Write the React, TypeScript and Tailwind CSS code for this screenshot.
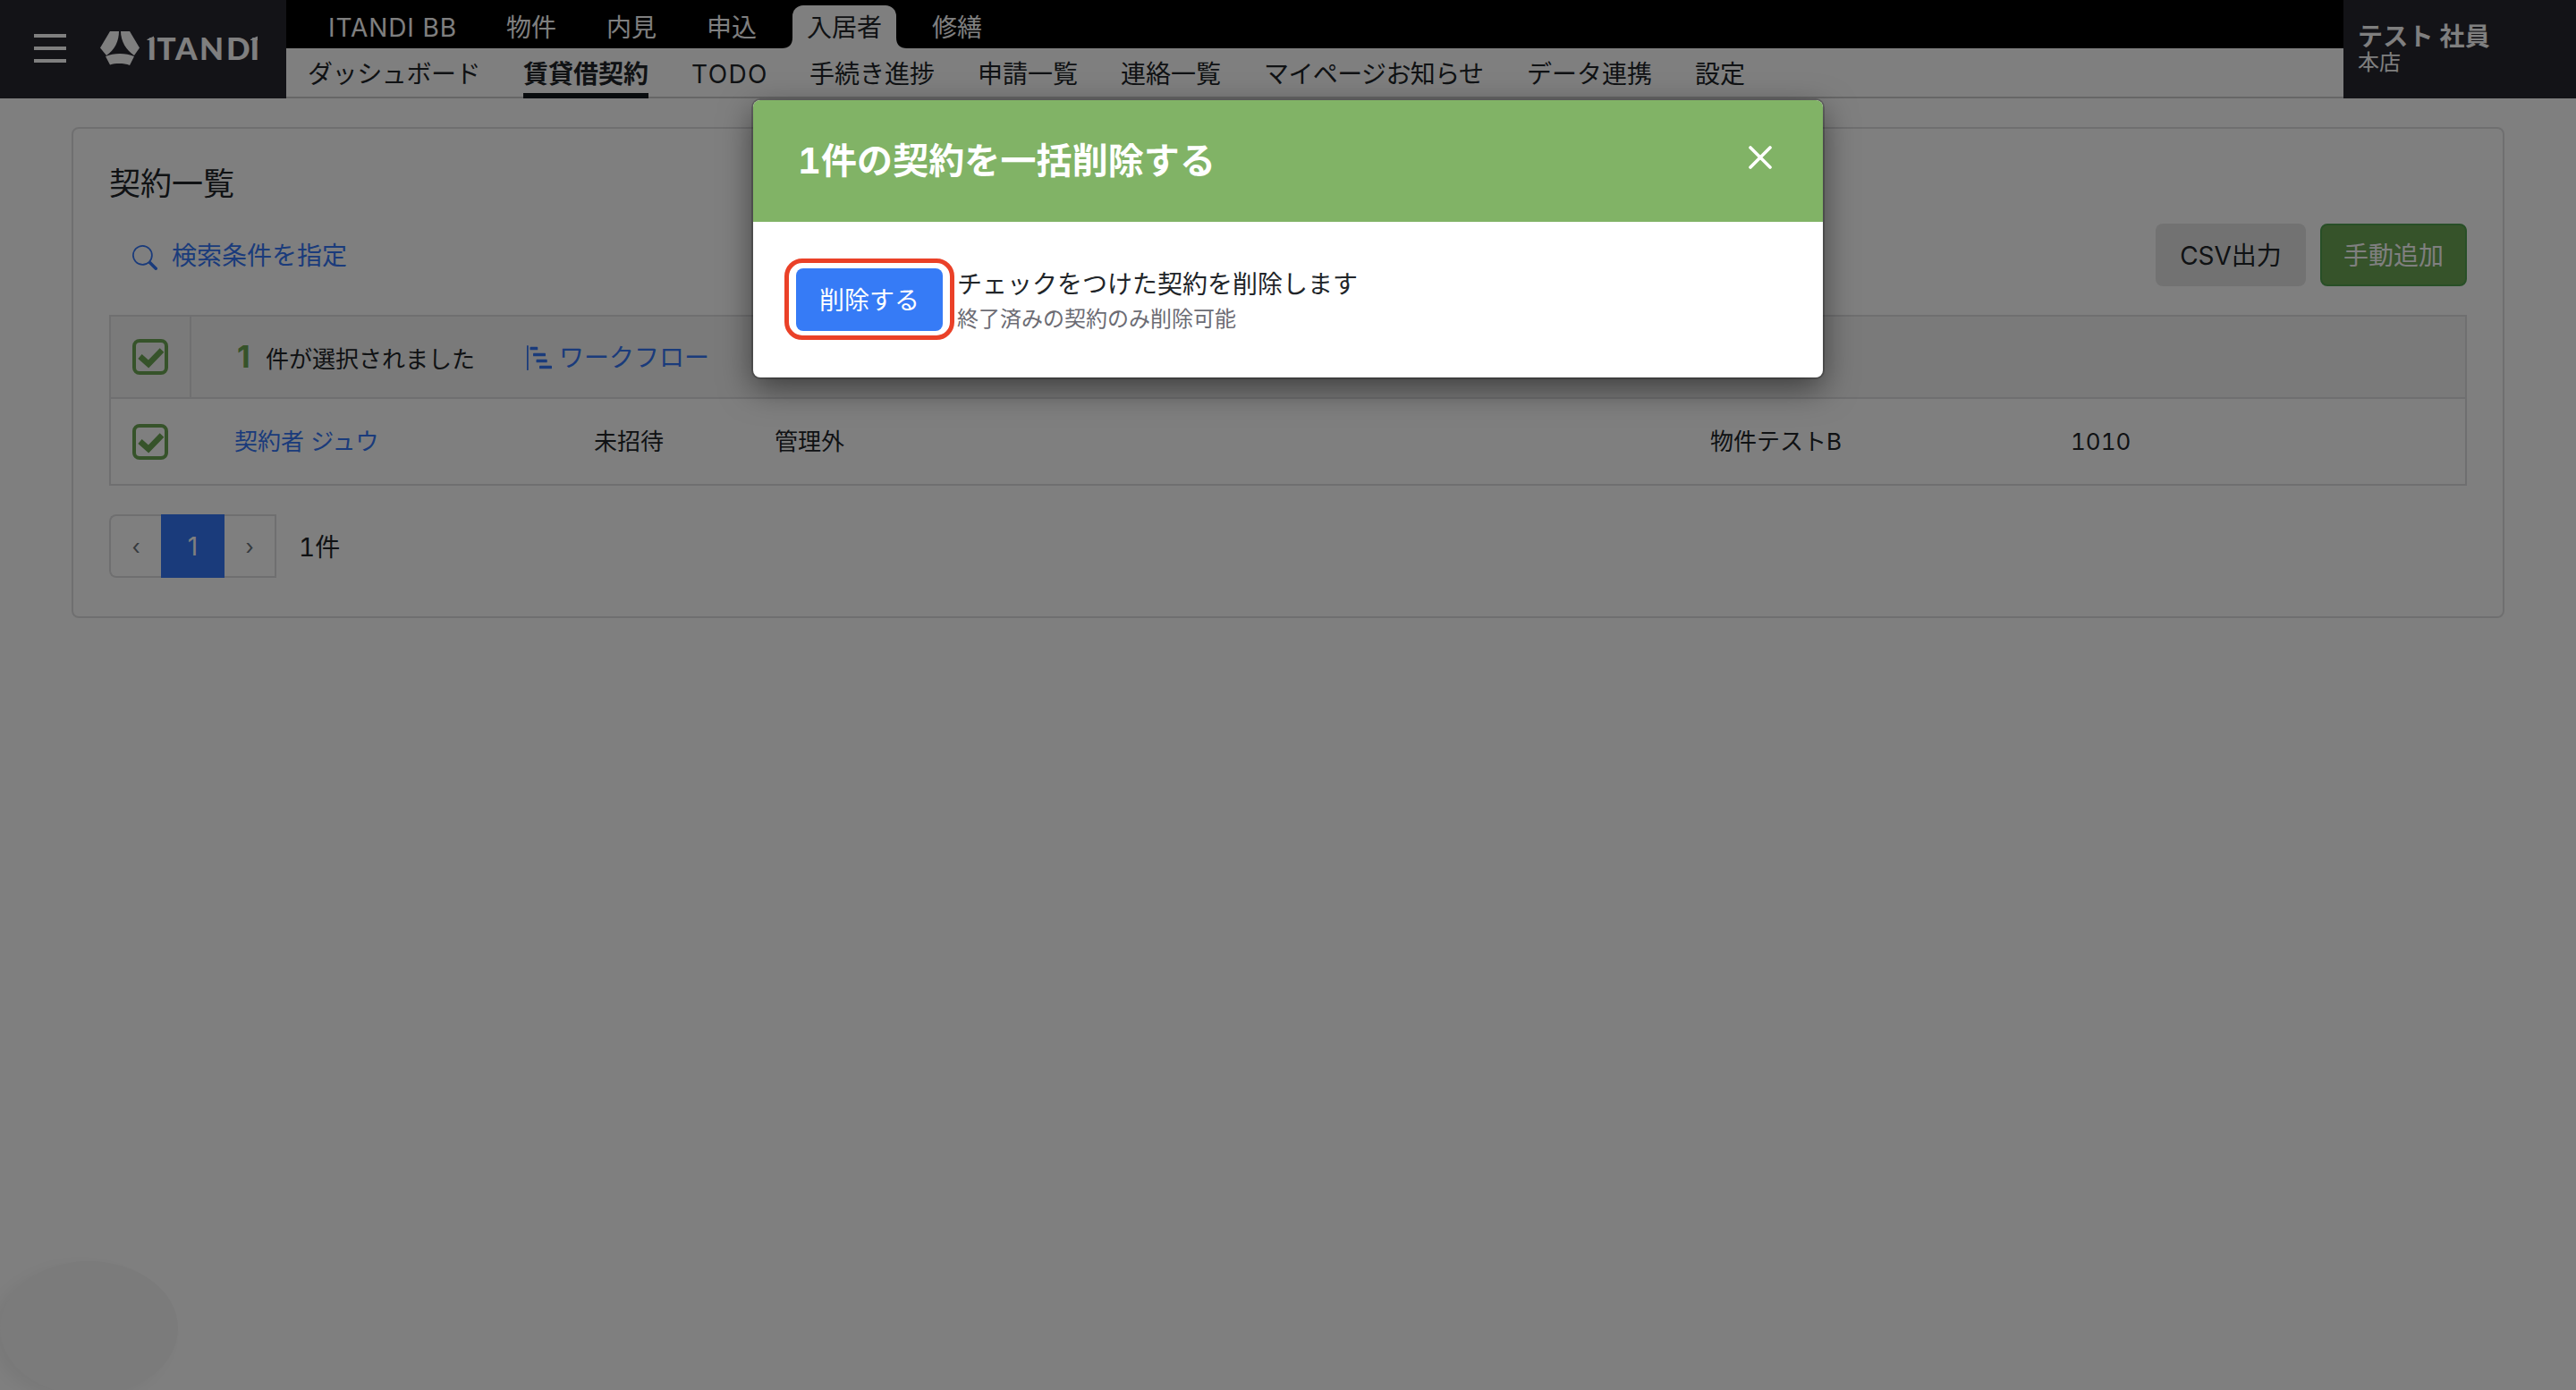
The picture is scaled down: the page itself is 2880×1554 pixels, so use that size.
import React from 'react';
import { BsBarChartSteps, BsSearch } from 'react-icons/bs';

const mainNav = [
  { label: 'ITANDI BB', box: 'ml-[47px] w-[144px] tracking-[0.9px]' },
  { label: '物件', box: 'ml-[55px] w-[56px]' },
  { label: '内見', box: 'ml-[56px] w-[56px]' },
  { label: '申込', box: 'ml-[56px] w-[56px]' },
];

const subNav = [
  { label: 'ダッシュボード', box: 'w-[193px] tracking-[-0.4px]' },
  { label: '賃貸借契約', box: 'w-[140px]', active: true },
  { label: 'TODO', box: 'w-[84px] tracking-[1.4px]' },
  { label: '手続き進捗', box: 'w-[140px]' },
  { label: '申請一覧', box: 'w-[112px]' },
  { label: '連絡一覧', box: 'w-[112px]' },
  { label: 'マイページお知らせ', box: 'w-[246px] tracking-[-0.6px]' },
  { label: 'データ連携', box: 'w-[140px]' },
  { label: '設定', box: 'w-[56px]' },
];

function Logo() {
  return (
    <div className="ml-[38px] flex items-center text-white">
      <svg width="44" height="38" viewBox="0 0 44 38" fill="currentColor">
        <path d="M11 0H21C21 11 16 21 7 27L0 18.5Z" />
        <path d="M23 0H33L44 18.5L38 27C29 21 23 11 23 0Z" />
        <path d="M6 28C15 24 29 24 38 28L33 38C27 35.500 17 35.500 11 37.500Z" />
      </svg>
      <svg className="ml-[9px] overflow-visible" width="124" height="44" viewBox="0 -3 124 44">
        <text
          x="-0.5 10.500 31 58 88 114.500"
          y="32"
          fill="currentColor"
          fontFamily="Lato"
          fontWeight="900"
          fontSize="35"
        >
          ITANDI
        </text>
        {/* Slanted ticks on the stems of the wordmark */}
        <path d="M-0.500 9L7 5.500V10H-0.500ZM115 9L123 5.500V10H115Z" fill="currentColor" />
      </svg>
    </div>
  );
}

function Header() {
  return (
    <header className="flex h-[110px]">
      <div className="flex w-[320px] items-center bg-[#27262f] pb-[2px] pl-[38px]">
        <div className="flex w-9 flex-col gap-[10px]">
          <span className="h-1 bg-white" />
          <span className="h-1 bg-white" />
          <span className="h-1 bg-white" />
        </div>
        <Logo />
      </div>
      <div className="flex flex-1 flex-col">
        <nav className="flex h-[54px] items-end bg-black text-white">
          {mainNav.map((item) => (
            <span key={item.label} className={`${item.box} h-12 leading-[50px] whitespace-nowrap`}>
              {item.label}
            </span>
          ))}
          <div className="ml-[28px] flex items-end">
            <svg width="12" height="12" viewBox="0 0 12 12">
              <path d="M12 0V12H0C8 12 12 8 12 0Z" fill="#fff" />
            </svg>
            <span className="h-12 w-[116px] rounded-t-[12px] bg-white text-center leading-[50px] text-[#212529]">
              入居者
            </span>
            <svg width="12" height="12" viewBox="0 0 12 12">
              <path d="M0 0V12H12C4 12 0 8 0 0Z" fill="#fff" />
            </svg>
          </div>
          <span className="ml-[28px] h-12 leading-[50px]">修繕</span>
        </nav>
        <nav className="flex h-[56px] gap-12 border-b-2 border-[#ccc] bg-white pl-6">
          {subNav.map((item) => (
            <span
              key={item.label}
              className={`${item.box} -mb-[2px] h-[56px] leading-[58px] whitespace-nowrap ${
                item.active ? 'border-b-[6px] border-[#13181d] font-bold' : ''
              }`}
            >
              {item.label}
            </span>
          ))}
        </nav>
      </div>
      <div className="w-[260px] bg-[#27262f] pt-[26px] pl-4 text-white">
        <div className="text-[28px] leading-[30px] font-bold tracking-[0.2px]">テスト 社員</div>
        <div className="text-[24px] leading-[28px]">本店</div>
      </div>
    </header>
  );
}

function Checkbox() {
  return (
    <span className="flex size-10 items-center justify-center rounded-[8px] border-4 border-[#6ca654]">
      <svg width="32" height="32" viewBox="0 0 32 32" className="shrink-0">
        <path d="M4.500 15.500L14 24L29 8.500" fill="none" stroke="#6ca654" strokeWidth="6.500" />
      </svg>
    </span>
  );
}

function ContractTable() {
  return (
    <div className="mt-[32px] border-2 border-[#dfdfe0] text-[26px]">
      <div className="flex h-[92px] items-stretch border-b-2 border-[#dfdfe0] bg-[#f4f4f4]">
        <div className="flex w-[90px] items-center border-r-2 border-[#dfdfe0] pl-6">
          <Checkbox />
        </div>
        <div className="flex items-center pl-[51px]">
          <span className="w-[32px] text-[34px] leading-none font-bold text-[#6ca654]">1</span>
          <span className="w-[292px] pt-[6px]">件が選択されました</span>
          <span className="flex items-center gap-2 pt-px text-[28px] text-[#3576f6]">
            <BsBarChartSteps className="size-7" />
            ワークフロー
          </span>
        </div>
      </div>
      <div className="flex h-[95px] items-center bg-white pl-6">
        <Checkbox />
        <span className="ml-[74px] w-[402px] text-[#3576f6]">契約者 ジュウ</span>
        <span className="w-[202px]">未招待</span>
        <span className="w-[1046px]">管理外</span>
        <span className="w-[403px]">物件テストB</span>
        <span className="tabular-nums">1010</span>
      </div>
    </div>
  );
}

function Pagination() {
  return (
    <div className="mt-8 flex items-center">
      <div className="flex h-[71px] text-[#6c757d]">
        <span className="flex w-[58px] items-center justify-center rounded-l-[8px] border-2 border-r-0 border-[#dfdfe0] pt-[2px] text-[24px]">
          ‹
        </span>
        <span className="flex w-[71px] items-center justify-center bg-[#3576f6] text-white">1</span>
        <span className="flex w-[58px] items-center justify-center border-2 border-l-0 border-[#dfdfe0] pt-[2px] text-[24px]">
          ›
        </span>
      </div>
      <span className="ml-[25px] pt-[2px] tabular-nums">1件</span>
    </div>
  );
}

function DeleteModal() {
  return (
    <div className="absolute top-[112px] left-[842px] h-[310px] w-[1196px] rounded-[8px] bg-white shadow-[0_0_0_2px_rgba(0,0,0,0.2),0_12px_36px_rgba(0,0,0,0.5)]">
      <div className="flex h-[136px] items-center justify-between rounded-t-[8px] bg-[#81b366] pr-[57px] pl-[50px] text-white">
        <h2 className="text-[40px] font-bold tracking-[0.1px] tabular-nums">1件の契約を一括削除する</h2>
        <svg className="-mt-2" width="26" height="26" viewBox="0 0 26 26">
          <path d="M2 2L24 24M24 2L2 24" stroke="currentColor" strokeWidth="3.6" strokeLinecap="round" />
        </svg>
      </div>
      <div className="flex pt-[41px] pl-[35px]">
        <div className="flex h-[91px] w-[190px] items-center justify-center rounded-[20px] border-[5px] border-[#ea4128]">
          <button className="h-[70px] w-[164px] rounded-[8px] bg-[#367bf6] pt-[2px] text-white">削除する</button>
        </div>
        <div className="ml-[3px] pt-[8px]">
          <p className="leading-[42px]">チェックをつけた契約を削除します</p>
          <p className="text-[24px] leading-[36px] text-[#6c6c74]">終了済みの契約のみ削除可能</p>
        </div>
      </div>
    </div>
  );
}

export default function App() {
  return (
    <div className="relative h-[1554px] w-[2880px] overflow-hidden bg-[#fefefe] font-['Inter','Noto_Sans_CJK_JP',sans-serif] text-[28px] leading-[42px] text-[#212529]">
      <Header />
      <main className="mx-20 mt-8 h-[549px] rounded-[8px] border-2 border-[#dfdfe0] bg-white px-10 pt-[34px]">
        <h1 className="text-[35px] leading-[54px]">契約一覧</h1>
        <div className="mt-[18px] flex h-[70px] items-center">
          <span className="flex items-center gap-4 pt-[2px] pl-[26px] text-[#3576f6]">
            <BsSearch className="mt-[3px] size-7" />
            検索条件を指定
          </span>
          <button className="ml-auto h-[70px] w-[168px] rounded-[8px] bg-[#e4e4e4] pt-[2px]">CSV出力</button>
          <button className="ml-4 h-[70px] w-[164px] rounded-[8px] border-2 border-[#519e4e] bg-[#6ca654] pt-[2px] text-white">
            手動追加
          </button>
        </div>
        <ContractTable />
        <Pagination />
      </main>

      {/* Floating help bubble */}
      <div className="absolute top-[1410px] left-0 h-[150px] w-[199px] rounded-[50%] bg-[#f6f6f6] shadow-[-10px_6px_16px_rgba(0,0,0,0.05)]" />

      <div className="absolute inset-0 bg-black/50" />
      <DeleteModal />
    </div>
  );
}
